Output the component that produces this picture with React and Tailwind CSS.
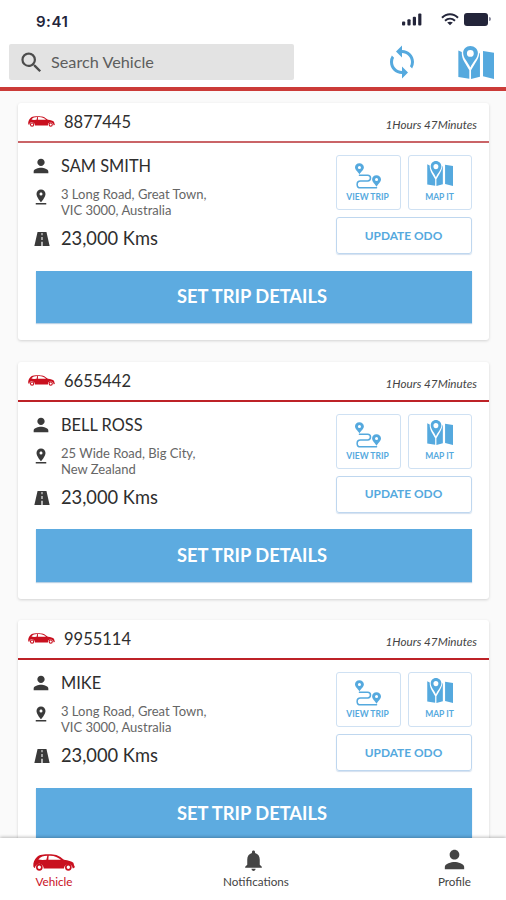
import { MdSearch, MdSync, MdPerson, MdPinDrop, MdNotifications } from 'react-icons/md';

const vehicles = [
  {
    id: '8877445',
    driver: 'SAM SMITH',
    address: ['3 Long Road, Great Town,', 'VIC 3000, Australia'],
    odo: '23,000 Kms',
    time: '1Hours 47Minutes',
    line: 'border-[#ca6467]',
  },
  {
    id: '6655442',
    driver: 'BELL ROSS',
    address: ['25 Wide Road, Big City,', 'New Zealand'],
    odo: '23,000 Kms',
    time: '1Hours 47Minutes',
    line: 'border-[#bd2227]',
  },
  {
    id: '9955114',
    driver: 'MIKE',
    address: ['3 Long Road, Great Town,', 'VIC 3000, Australia'],
    odo: '23,000 Kms',
    time: '1Hours 47Minutes',
    line: 'border-[#bd2227]',
  },
];

const CarIcon = ({ className }) => (
  <svg viewBox="0 0 126 50" preserveAspectRatio="none" className={className} fill="currentColor">
    <path
      fillRule="evenodd"
      d="M1 35C0 26 4 17 12 9C15 5 20 3 27 2C42 0 60 0 70 3C79 6 86 12 93 17C106 19 116 21 121 26C123 30 122 33 125 36C126 40 123 42 119 42A13 13 0 0 0 93 43H32A13 13 0 0 0 6 41C3 40 1 38 1 35ZM16 16L28 18L40 17L43 5C31 5 23 8 16 16ZM47 5L46 17L84 17C74 9 64 4 47 5Z"
    />
    <path
      fillRule="evenodd"
      d="M19 29A10 10 0 1 0 19 49A10 10 0 1 0 19 29ZM19 34A5 5 0 1 1 19 44A5 5 0 1 1 19 34ZM106 29A10 10 0 1 0 106 49A10 10 0 1 0 106 29ZM106 34A5 5 0 1 1 106 44A5 5 0 1 1 106 34Z"
    />
  </svg>
);

const MapIcon = ({ className }) => (
  <svg viewBox="0 0 105 98" preserveAspectRatio="none" className={className} fill="currentColor">
    <path d="M1 13L11 18C10 31 15 41 20 50L33 72V97L1 92Z" />
    <path d="M38 72L51 50C57 40 61 32 62 22L64 20V91L38 98Z" />
    <path d="M73 15L105 20V98L73 90Z" />
    <path
      fillRule="evenodd"
      d="M36 0C24 0 15 9 15 21C15 36 29 48 36 64C43 48 58 36 58 21C58 9 48 0 36 0ZM36 12A10 10 0 1 1 36 32A10 10 0 1 1 36 12Z"
    />
  </svg>
);

const RouteIcon = ({ className }) => (
  <svg viewBox="0 0 76 75" className={className} fill="currentColor">
    <path
      fillRule="evenodd"
      d="M13 0C5 0 0 5 0 12C0 20 8 24 13 33C18 24 26 20 26 12C26 5 20 0 13 0ZM13 8A4.500 4.500 0 1 1 13 17A4.500 4.500 0 1 1 13 8Z"
    />
    <path
      fillRule="evenodd"
      d="M63 35C55 35 50 40 50 47C50 55 58 60 63 69C68 60 76 55 76 47C76 40 70 35 63 35ZM63 43A4.500 4.500 0 1 1 63 52A4.500 4.500 0 1 1 63 43Z"
    />
    <path
      d="M13 35H37C48 35 48 52 37 52H16C3 52 3 72 16 72H63"
      fill="none"
      stroke="currentColor"
      strokeWidth="4.500"
      strokeLinecap="round"
    />
  </svg>
);

const RoadIcon = ({ className }) => (
  <svg viewBox="0 0 48 44" className={className} fill="currentColor">
    <path
      fillRule="evenodd"
      d="M10 0H38L48 44H0ZM22.500 3V10H25.500V3ZM22.300 16V25H25.700V16ZM22 31V44H26V31Z"
    />
  </svg>
);

const StatusBar = () => (
  <div className="flex h-[44px] items-start justify-between pl-[36px] pr-[15px] pt-[13px] text-[#23253a]">
    <span className="font-['Inter'] text-[15px] font-semibold leading-[18px] tracking-[0.5px]">9:41</span>
    <div className="flex items-start">
      <svg viewBox="0 0 20 13" className="mr-[19px] h-[13px] w-[20px]" fill="currentColor">
        <rect x="0" y="8.500" width="3.200" height="4" rx="1" />
        <rect x="5.400" y="6.300" width="3.200" height="6.200" rx="1" />
        <rect x="10.800" y="3.700" width="3.200" height="8.800" rx="1" />
        <rect x="16.200" y="0.500" width="3.200" height="12" rx="1" />
      </svg>
      <svg viewBox="0 0 18 13" className="mr-[5px] h-[13px] w-[18px]" fill="none" stroke="currentColor">
        <path d="M1 4.800C5.500 0 12.500 0 17 4.800" strokeWidth="2" />
        <path d="M4 7.800C7 5 11 5 14 7.800" strokeWidth="1.900" />
        <path d="M9 12.300L6.200 9.600C7.800 8.300 10.200 8.300 11.800 9.600Z" fill="currentColor" stroke="none" />
      </svg>
      <div className="h-[12.500px] w-[24px] rounded-[3px] bg-[#23253a]" />
      <div className="ml-[1px] mt-[4px] h-[4px] w-[2px] rounded-r-full bg-[#85869a]" />
    </div>
  </div>
);

const Header = () => (
  <header className="h-[91px] shrink-0 border-b-[4px] border-[#cb3b38] bg-white">
    <StatusBar />
    <div className="flex items-start pl-[9px] pr-[12px]">
      <div className="flex h-[36px] w-[285px] items-center rounded-[2px] bg-[#e3e3e3] pl-[9px] text-[#4c4c4c]">
        <MdSearch className="h-[27px] w-[27px]" />
        <span className="ml-[6px] text-[16.250px] leading-[20px] text-[#5d5d5d]">Search Vehicle</span>
      </div>
      <button className="ml-[90px] text-[#55a9de]">
        <MdSync className="h-[36px] w-[36px]" />
      </button>
      <button className="ml-auto mt-[2px] text-[#55a9de]">
        <MapIcon className="h-[33px] w-[36px]" />
      </button>
    </div>
  </header>
);

const VehicleCard = ({ vehicle }) => (
  <div className="h-[237px] shrink-0 rounded-[3px] bg-white shadow-[0_1px_3px_rgba(0,0,0,0.16)]">
    <div className={`flex h-[40px] items-start border-b-[2.500px] pl-[10px] pr-[12px] ${vehicle.line}`}>
      <CarIcon className="mt-[13px] h-[11px] w-[27px] text-[#c9101f]" />
      <span className="ml-[9px] mt-[9px] text-[16.500px] leading-[20px] text-[#2e2e2e]">{vehicle.id}</span>
      <span className="ml-auto mt-[13px] text-[11.700px] italic leading-[16px] text-[#444]">{vehicle.time}</span>
    </div>

    <div className="flex h-[127.500px] justify-between pl-[15px] pr-[17px]">
      <div className="text-[#3a3a3a]">
        <div className="mt-[11px] flex h-[24px] items-center">
          <MdPerson className="-ml-[3px] h-[22px] w-[22px]" />
          <span className="ml-[9px] text-[16.400px] leading-[20px] text-[#2e2e2e]">{vehicle.driver}</span>
        </div>
        <div className="mt-[8px] flex h-[32px] items-start">
          <MdPinDrop className="-ml-px mt-[2px] h-[18px] w-[18px]" />
          <div className="ml-[11px] text-[13px] leading-[16px] text-[#666]">
            {vehicle.address.map((row) => (
              <div key={row}>{row}</div>
            ))}
          </div>
        </div>
        <div className="mt-[8px] flex h-[24px] items-center">
          <RoadIcon className="ml-px mt-[2px] h-[14px] w-[16px]" />
          <span className="ml-[11px] text-[18.300px] leading-[22px] text-[#2e2e2e]">{vehicle.odo}</span>
        </div>
      </div>

      <div className="w-[136px] pt-[12px] text-[#55a9de]">
        <div className="flex justify-between">
          <button className="flex h-[55px] w-[65px] flex-col items-center rounded-[3px] border border-[#cfe1f3] pt-[7px]">
            <RouteIcon className="-ml-[2px] h-[26px] w-[26px]" />
            <span className="-ml-[2px] mt-[3px] text-[8.500px] font-bold leading-[11px]">VIEW TRIP</span>
          </button>
          <button className="flex h-[55px] w-[64px] flex-col items-center rounded-[3px] border border-[#cfe1f3] pt-[5px]">
            <MapIcon className="h-[25px] w-[26px]" />
            <span className="-ml-px mt-[6px] text-[8.500px] font-bold leading-[11px]">MAP IT</span>
          </button>
        </div>
        <button className="mt-[7px] h-[37px] w-full rounded-[3px] border border-[#bfd7ef] pr-px text-[11.900px] font-bold shadow-[0_1px_1px_rgba(80,130,190,0.25)]">
          UPDATE ODO
        </button>
      </div>
    </div>

    <button className="ml-[17.500px] block h-[52.500px] w-[436px] bg-[#5dabe0] pr-[3px] text-[18.300px] font-bold text-white shadow-[0_1px_1px_rgba(80,140,190,0.4)]">
      SET TRIP DETAILS
    </button>
  </div>
);

const BottomNav = () => (
  <nav className="flex h-[62px] shrink-0 justify-between bg-white pl-[33px] pr-[35px] text-[11.700px] leading-[14px] text-[#444] shadow-[0_-1px_3px_rgba(0,0,0,0.25)]">
    <div className="flex w-[42px] flex-col items-center text-[#c9101f]">
      <CarIcon className="mt-[16px] h-[17px] w-[42px]" />
      <span className="mt-[3px]">Vehicle</span>
    </div>
    <div className="flex flex-col items-center">
      <MdNotifications className="-ml-[5px] mt-[10px] h-[25px] w-[25px]" />
      <span className="-ml-px mt-px">Notifications</span>
    </div>
    <div className="flex flex-col items-center">
      <MdPerson className="mt-[7px] h-[29px] w-[29px]" />
      <span>Profile</span>
    </div>
  </nav>
);

export default function App() {
  return (
    <div className="flex h-[900px] w-[506px] flex-col overflow-hidden bg-[#fafafa] font-['Lato',sans-serif]">
      <Header />
      <main className="flex min-h-0 flex-1 flex-col gap-[21.500px] overflow-hidden pl-[18px] pr-[17px] pt-[12px]">
        {vehicles.map((vehicle) => (
          <VehicleCard key={vehicle.id} vehicle={vehicle} />
        ))}
      </main>
      <BottomNav />
    </div>
  );
}
